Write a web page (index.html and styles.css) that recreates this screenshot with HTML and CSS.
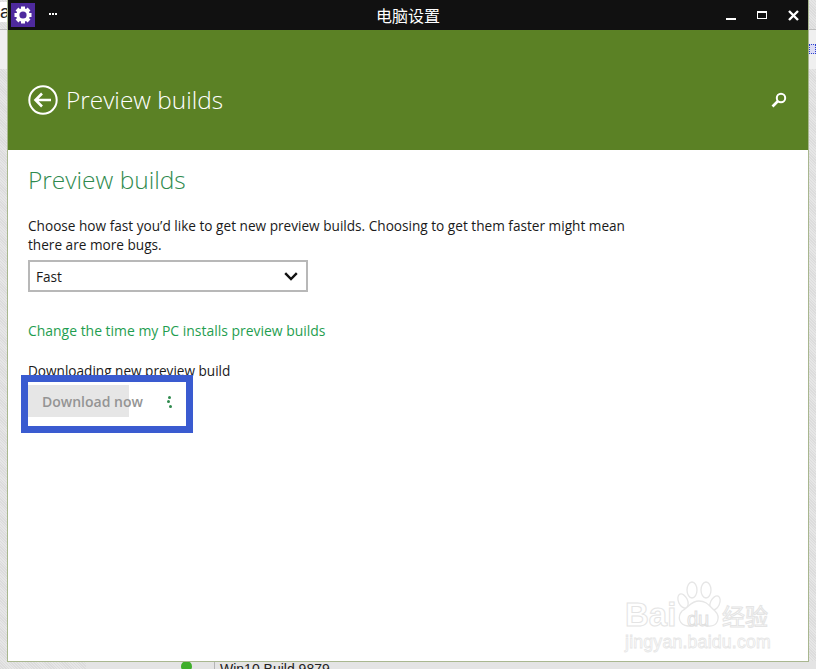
FILE: index.html
```html
<!DOCTYPE html>
<html lang="en">
<head>
<meta charset="utf-8">
<title>电脑设置</title>
<link rel="stylesheet" href="styles.css">
</head>
<body>
<div class="desktop">
  <span class="bg-letter">a</span>
  <span class="bg-rule bg-rule-left"></span>
  <span class="bg-rule bg-rule-right"></span>
  <span class="bg-speck"></span>
  <div class="bg-bottom">
    <span class="bg-dot"></span>
    <span class="bg-sep"></span>
    <span class="bg-build">Win10 Build 9879</span>
  </div>

  <main class="window">
    <header class="titlebar">
      <div class="titlebar-left">
        <span class="app-icon">
          <svg width="24" height="24" viewBox="0 0 24 24">
            <g fill="#fff">
              <circle cx="12" cy="12" r="6.8"/>
              <rect x="10" y="3.5" width="4" height="17"/>
              <rect x="10" y="3.5" width="4" height="17" transform="rotate(45 12 12)"/>
              <rect x="10" y="3.5" width="4" height="17" transform="rotate(90 12 12)"/>
              <rect x="10" y="3.5" width="4" height="17" transform="rotate(135 12 12)"/>
            </g>
            <circle cx="12" cy="12" r="3.6" fill="#4e2a9e"/>
          </svg>
        </span>
        <span class="more"><i></i><i></i><i></i></span>
      </div>
      <div class="title">电脑设置</div>
      <div class="controls">
        <span class="ctl-min"></span>
        <span class="ctl-max"></span>
        <svg class="ctl-close" width="11" height="11" viewBox="0 0 11 11"><path d="M1 1l9 9M10 1l-9 9" stroke="#fff" stroke-width="2.4"/></svg>
      </div>
    </header>

    <section class="hero">
      <svg class="back" width="30" height="30" viewBox="0 0 30 30">
        <circle cx="15" cy="15" r="13.7" fill="none" stroke="#fff" stroke-width="2"/>
        <path d="M7.5 15H23M14 8.5L7.5 15l6.5 6.5" fill="none" stroke="#fff" stroke-width="2.6"/>
      </svg>
      <h1 class="hero-title">Preview builds</h1>
      <svg class="search" width="16" height="16" viewBox="0 0 16 16">
        <circle cx="10" cy="6" r="4.2" fill="none" stroke="#fff" stroke-width="2"/>
        <path d="M7 9l-5.5 5.5" stroke="#fff" stroke-width="2.6"/>
      </svg>
    </section>

    <section class="content">
      <h2 class="heading">Preview builds</h2>
      <p class="desc">Choose how fast you’d like to get new preview builds. Choosing to get them faster might mean there are more bugs.</p>
      <div class="select">
        <span>Fast</span>
        <svg width="14" height="9" viewBox="0 0 14 9"><path d="M1.2 1.2L7 7l5.8-5.8" fill="none" stroke="#111" stroke-width="2.4"/></svg>
      </div>
      <a class="link">Change the time my PC installs preview builds</a>
      <p class="status">Downloading new preview build</p>
      <div class="download-row">
        <div class="btn"><span class="btn-label">Download now</span></div>
        <span class="spinner"><i></i><i></i><i></i></span>
      </div>
    </section>

    <div class="highlight"></div>
  </main>

  <div class="watermark">
    <span class="wm-bai">Bai</span>
    <svg class="wm-paw" width="46" height="50" viewBox="0 0 46 50">
      <g fill="#fff" stroke="#e6e6e6" stroke-width="1.3">
        <ellipse cx="16" cy="9" rx="5" ry="8"/>
        <ellipse cx="30" cy="9" rx="5" ry="8"/>
        <ellipse cx="7" cy="20" rx="4.5" ry="7.5" transform="rotate(-25 7 20)"/>
        <ellipse cx="39" cy="22" rx="4.5" ry="7.5" transform="rotate(25 39 22)"/>
        <path d="M23 20c8 0 10 5 16 10 6 6 3 16-7 15-4 0-6-2-9-2s-5 3-11 2C3 44 1 36 6 30c7-4 9-10 17-10z"/>
      </g>
    </svg>
    <span class="wm-du">du</span>
    <span class="wm-cn">经验</span>
    <span class="wm-url">jingyan.baidu.com</span>
  </div>
</div>
</body>
</html>
```

FILE: styles.css
```css
* { box-sizing: border-box; }
html, body { margin: 0; padding: 0; }
body {
  width: 816px;
  height: 669px;
  overflow: hidden;
  font-family: "Open Sans", "Noto Sans CJK SC", sans-serif;
}
.desktop {
  position: relative;
  width: 816px;
  height: 669px;
  overflow: hidden;
  background: repeating-linear-gradient(45deg, #dcdcdc 0 1px, #e6e6e6 1px 2px);
}
.bg-letter {
  position: absolute;
  left: 0;
  top: 2px;
  font: 18px/20px "Liberation Sans", sans-serif;
  color: #222;
  width: 8px;
  overflow: hidden;
  background: #fff;
}
.bg-rule {
  position: absolute;
  height: 40px;
  top: 29px;
  border-top: 1px solid #bdbdbd;
  background: #f0f0f0;
}
.bg-rule-left { left: 0; width: 8px; }
.bg-rule-right { left: 808px; width: 8px; }
.bg-speck {
  position: absolute;
  left: 809px;
  top: 44px;
  width: 7px;
  height: 10px;
  border: 1px dotted #2a3fd0;
  background: #dcdcf5;
}
.bg-bottom {
  position: absolute;
  left: 86px;
  top: 661px;
  width: 730px;
  height: 8px;
  background: #e4e4e4;
}
.bg-dot {
  position: absolute;
  left: 95px;
  top: 0;
  width: 11px;
  height: 11px;
  border-radius: 50%;
  background: #3fae2a;
}
.bg-sep {
  position: absolute;
  left: 128px;
  top: 0;
  width: 1px;
  height: 8px;
  background: #b5b5b5;
}
.bg-build {
  position: absolute;
  left: 134px;
  top: 1px;
  font: 14px/14px "Liberation Sans", sans-serif;
  color: #222;
  white-space: nowrap;
}

.window {
  position: absolute;
  left: 7px;
  top: 0;
  width: 802px;
  height: 662px;
  border: 1px solid #a9b78f;
  border-top: 0;
  background: #fff;
  display: flex;
  flex-direction: column;
}
.titlebar {
  height: 30px;
  background: #111;
  color: #fff;
  display: grid;
  grid-template-columns: 1fr auto 1fr;
  align-items: center;
  flex: none;
}
.titlebar-left { display: flex; align-items: center; gap: 14px; }
.app-icon {
  width: 24px;
  height: 24px;
  margin-left: 3px;
  background: #4e2a9e;
  display: block;
}
.app-icon svg { display: block; }
.more { display: flex; gap: 1px; margin-top: -2px; }
.more i { width: 2px; height: 2px; background: #fff; display: block; }
.title {
  font-size: 16px;
  line-height: 30px;
  font-family: "Noto Sans CJK SC", sans-serif;
}
.controls {
  display: flex;
  align-items: center;
  justify-content: flex-end;
  padding-right: 9px;
}
.ctl-min { width: 10px; height: 2px; background: #fff; margin-top: 8px; margin-right: 21px; }
.ctl-max { width: 10px; height: 8px; border: 1px solid #fff; border-top-width: 2px; margin-right: 21px; }
.ctl-close { display: block; }

.hero {
  height: 120px;
  flex: none;
  background: #5b8125;
  display: flex;
  align-items: center;
  padding: 0 21px 0 20px;
  color: #fff;
}
.back { flex: none; margin-top: 20px; }
.hero-title {
  margin: 20px 0 0 8px;
  font-size: 24.4px;
  font-weight: 300;
  line-height: 30px;
  flex: 1;
}
.search { margin-top: 20px; }

.content { padding: 13px 20px 0; position: relative; }
.heading {
  margin: 0;
  font-size: 24.5px;
  font-weight: 300;
  line-height: 34px;
  color: #2f8a4e;
}
.desc {
  margin: 19px 0 0;
  width: 610px;
  font-size: 13.63px;
  line-height: 19px;
  color: #1a1a1a;
}
.select {
  margin-top: 6px;
  width: 280px;
  height: 32px;
  border: 2px solid #b8b8b8;
  display: flex;
  align-items: center;
  justify-content: space-between;
  padding: 0 8px 0 6px;
  font-size: 13.63px;
  color: #1a1a1a;
}
.link {
  display: block;
  margin-top: 29px;
  font-size: 13.95px;
  line-height: 20px;
  color: #1f9e50;
}
.status {
  margin: 20px 0 0;
  font-size: 13.6px;
  line-height: 19px;
  color: #1a1a1a;
}
.download-row {
  margin-top: 5px;
  display: flex;
  align-items: center;
  position: relative;
  z-index: 2;
}
.btn {
  width: 101px;
  height: 32px;
  background: #e6e6e6;
  padding-left: 14px;
  white-space: nowrap;
  display: flex;
  align-items: center;
}
.btn-label {
  font-size: 14px;
  font-weight: 600;
  color: #949494;
}
.spinner { margin-left: 38px; display: block; width: 5px; height: 14px; position: relative; }
.spinner i { position: absolute; width: 3px; height: 3px; border-radius: 50%; background: #2f8a4e; }
.spinner i:nth-child(1) { left: 1px; top: 2px; }
.spinner i:nth-child(2) { left: 0; top: 6px; }
.spinner i:nth-child(3) { left: 2px; top: 11px; }

.highlight {
  position: absolute;
  left: 13px;
  top: 375px;
  width: 172px;
  height: 58px;
  border: 7px solid #3a5bd0;
  background: #fff;
  z-index: 1;
}

.watermark {
  position: absolute;
  left: 624px;
  top: 580px;
  width: 150px;
  height: 72px;
  color: #fff;
}
.wm-bai {
  position: absolute;
  left: 1px;
  top: 17px;
  font: bold 33px/36px "Liberation Sans", sans-serif;
  color: #fff;
  -webkit-text-stroke: 1px #e4e4e4;
}
.wm-paw { position: absolute; left: 52px; top: 1px; }
.wm-du {
  position: absolute;
  left: 63px;
  top: 28px;
  font: 20px/22px "Liberation Sans", sans-serif;
  color: #fff;
  -webkit-text-stroke: 1px #e0e0e0;
}
.wm-cn {
  position: absolute;
  left: 98px;
  top: 21px;
  font: 23px/28px "Noto Sans CJK SC", sans-serif;
  color: #fff;
  -webkit-text-stroke: 1px #e4e4e4;
  white-space: nowrap;
}
.wm-url {
  position: absolute;
  left: 1px;
  top: 52px;
  font: 17.7px/20px "Liberation Sans", sans-serif;
  color: #fff;
  -webkit-text-stroke: 0.8px #e6e6e6;
  letter-spacing: 0.2px;
  white-space: nowrap;
}
```
